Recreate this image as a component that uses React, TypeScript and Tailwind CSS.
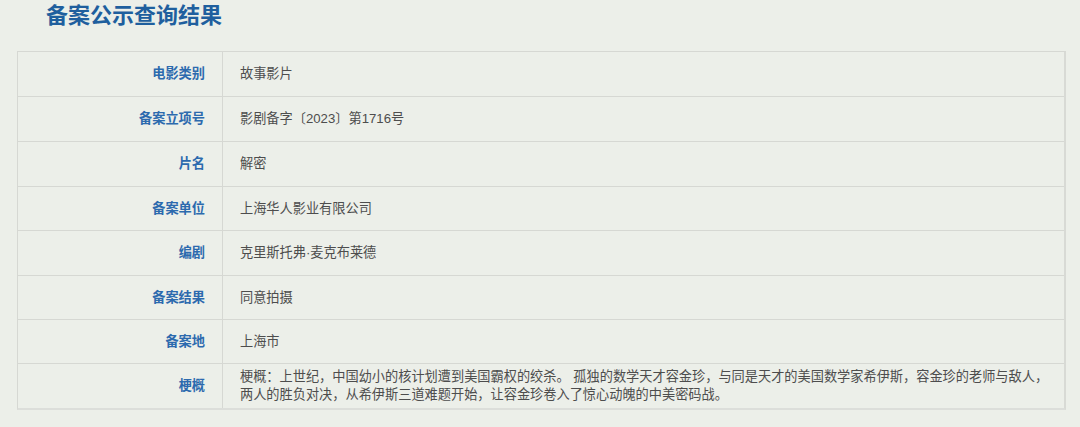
import React from "react";

const rows: { label: string; value: React.ReactNode; h: string }[] = [
  { label: "电影类别", value: "故事影片", h: "h-[44px]" },
  { label: "备案立项号", value: "影剧备字〔2023〕第1716号", h: "h-[45px]" },
  { label: "片名", value: "解密", h: "h-[45px]" },
  { label: "备案单位", value: "上海华人影业有限公司", h: "h-[44px]" },
  { label: "编剧", value: "克里斯托弗·麦克布莱德", h: "h-[45px]" },
  { label: "备案结果", value: "同意拍摄", h: "h-[44px]" },
  { label: "备案地", value: "上海市", h: "h-[44px]" },
  {
    label: "梗概",
    value:
      "梗概：上世纪，中国幼小的核计划遭到美国霸权的绞杀。 孤独的数学天才容金珍，与同是天才的美国数学家希伊斯，容金珍的老师与敌人，两人的胜负对决，从希伊斯三道难题开始，让容金珍卷入了惊心动魄的中美密码战。",
    h: "h-[45px]",
  },
];

export default function App() {
  return (
    <div
      className="w-[1080px] h-[427px] bg-[#ecefe9] overflow-hidden"
      style={{ fontFamily: '"Liberation Sans", "Noto Sans CJK SC", sans-serif' }}
    >
      <div className="pl-[46px] pt-[1px] h-[51px]">
        <h1 className="text-[22px] leading-[30px] font-bold text-[#1f5f9e]">
          备案公示查询结果
        </h1>
      </div>
      <div className="ml-[17px] w-[1049px] border border-[#d6d8d3] border-r-2 border-b-2 border-r-[#d8dad5] border-b-[#dcdeda]">
        {rows.map((r, i) => (
          <div
            key={i}
            className={`flex ${r.h} ${i > 0 ? "border-t border-[#d6d8d3]" : ""}`}
          >
            <div className="w-[205px] shrink-0 border-r border-[#d6d8d3] flex items-center justify-end pr-[17px] text-[13.2px] font-bold text-[#2c6aae]">
              {r.label}
            </div>
            <div className="flex-1 flex items-center pl-[17px] pr-[8px] text-[13.2px] leading-[18px] text-[#4d4d4d]">
              {r.value}
            </div>
          </div>
        ))}
      </div>
    </div>
  );
}
